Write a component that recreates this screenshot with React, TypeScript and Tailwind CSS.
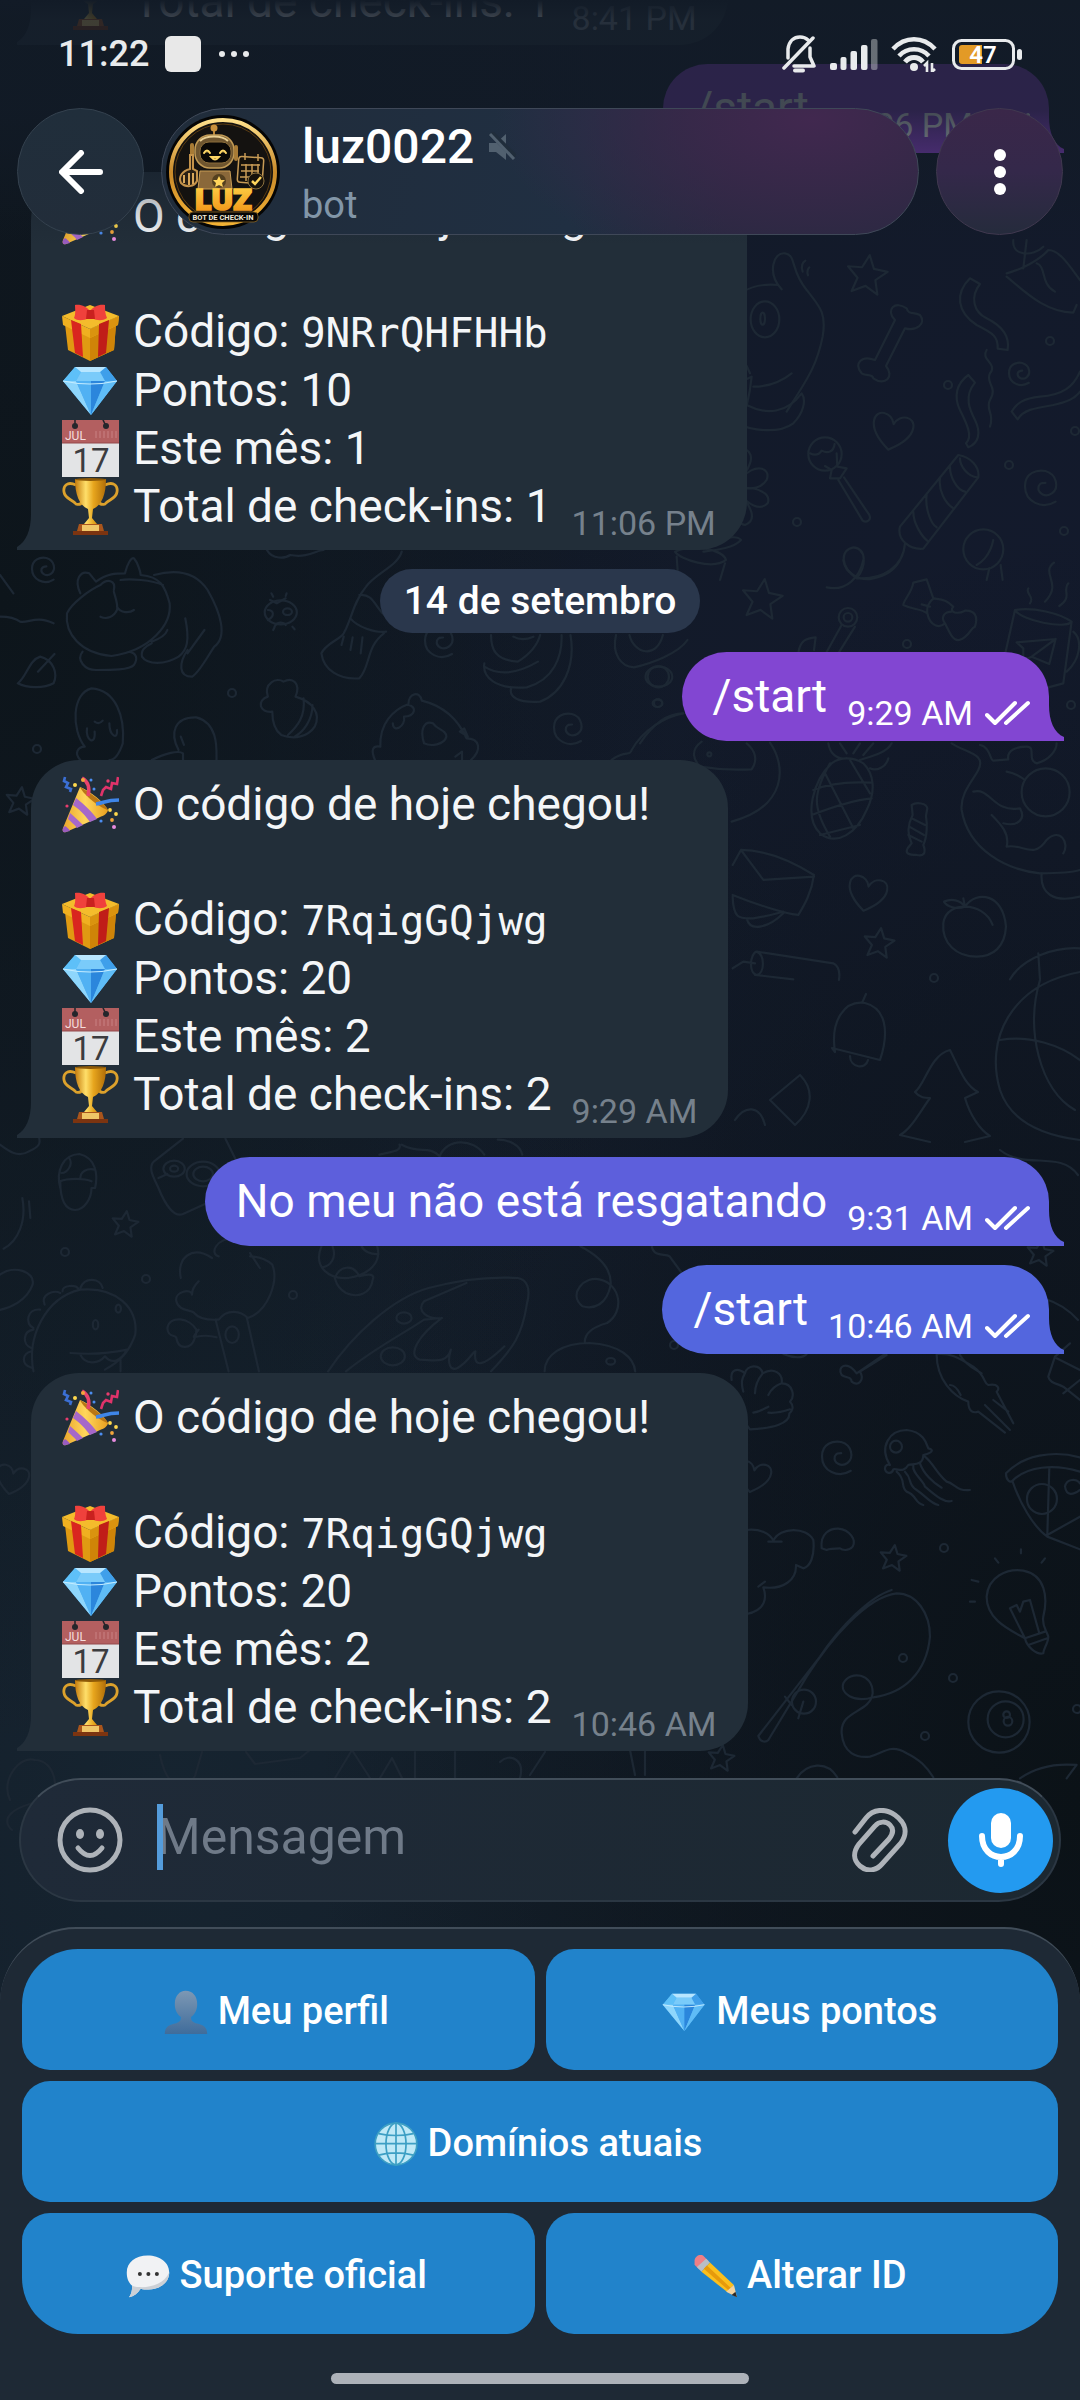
import type { ReactNode } from "react";

type Incoming = {
  from: "bot";
  code: string;
  points: number;
  month: number;
  total: number;
  time: string;
};

type Outgoing = {
  from: "me";
  text: string;
  time: string;
  tone: string;
};

type DayMark = { from: "day"; text: string };

type Message = Incoming | Outgoing | DayMark;

const messages: Message[] = [
  { from: "bot", code: "4KdTmWbXsa", points: 10, month: 1, total: 1, time: "8:41 PM" },
  { from: "me", text: "/start", time: "11:06 PM", tone: "bg-[#8f43cf] text-[#8f43cf]" },
  { from: "bot", code: "9NRrQHFHHb", points: 10, month: 1, total: 1, time: "11:06 PM" },
  { from: "day", text: "14 de setembro" },
  { from: "me", text: "/start", time: "9:29 AM", tone: "bg-[#8246d2] text-[#8246d2]" },
  { from: "bot", code: "7RqigGQjwg", points: 20, month: 2, total: 2, time: "9:29 AM" },
  {
    from: "me",
    text: "No meu não está resgatando",
    time: "9:31 AM",
    tone: "bg-[#5d5fdc] text-[#5d5fdc]",
  },
  { from: "me", text: "/start", time: "10:46 AM", tone: "bg-[#5366de] text-[#5366de]" },
  { from: "bot", code: "7RqigGQjwg", points: 20, month: 2, total: 2, time: "10:46 AM" },
];

/* ---------- emoji drawings, all on a 57 x 57 box ---------- */

function Emoji({ className, children }: { className?: string; children: ReactNode }) {
  return (
    <svg viewBox="0 0 57 57" className={className ?? "size-[57px] shrink-0"} aria-hidden>
      {children}
    </svg>
  );
}

function PartyEmoji() {
  return (
    <Emoji>
      <defs>
        <linearGradient id="cone" x1="0" y1="0" x2="1" y2="0">
          <stop offset="0" stopColor="#e9a52b" />
          <stop offset=".5" stopColor="#ffd65c" />
          <stop offset="1" stopColor="#e8a01f" />
        </linearGradient>
      </defs>
      <path d="M18 11C28 15 42 26 46 34C45 39 40 40 36 42L4 56C1 57 0 55 1 52Z" fill="url(#cone)" />
      <path d="M14 22C22 28 31 37 35 43L28 46C24 40 17 33 11 29Z" fill="#a668c9" />
      <path d="M8 37C13 41 18 46 21 49L15 52C12 48 9 46 6 43Z" fill="#a668c9" />
      <path d="M3 50C5 51 7 53 8 55L4 56C1 57 0 55 1 52Z" fill="#9a5cc0" />
      <path d="M18 11C24 14 42 26 46 34C40 33 22 20 18 11Z" fill="#b97716" />
      <path d="M20 2C27 6 28 12 26 20" stroke="#e8436d" strokeWidth="3.5" fill="none" />
      <path d="M34 28C42 27 44 24 57 24" stroke="#3f86e8" strokeWidth="3.5" fill="none" />
      <path d="M3 1L2 5L6 7L4 11L9 13L8 16" stroke="#3b6fd4" strokeWidth="2.6" fill="none" />
      <path d="M56 1L55 8L50 7L49 13L44 11L41 14L39 20" stroke="#e0336a" strokeWidth="2.6" fill="none" />
      <circle cx="13" cy="9" r="2" fill="#ffd84d" />
      <circle cx="21" cy="4" r="2" fill="#f2a63b" />
      <circle cx="29" cy="4" r="1.5" fill="#4c8df0" />
      <circle cx="46" cy="5" r="1.7" fill="#e83c6e" />
      <circle cx="32" cy="13" r="1.5" fill="#4c8df0" />
      <circle cx="5" cy="30" r="1.6" fill="#e83c6e" />
      <circle cx="48" cy="34" r="1.9" fill="#ffd84d" />
      <circle cx="54" cy="38" r="1.9" fill="#ffd84d" />
      <circle cx="50" cy="44" r="1.9" fill="#f2a63b" />
      <circle cx="39" cy="45" r="1.6" fill="#4c8df0" />
      <circle cx="52" cy="51" r="2" fill="#e78be0" />
    </Emoji>
  );
}

function GiftEmoji() {
  return (
    <Emoji>
      <path d="M3 20L28 32L54 20L52 46L28 57L6 46Z" fill="#e09a12" />
      <path d="M28 32L54 20L52 46L28 57Z" fill="#cf8408" />
      <path d="M0 12L28 25L57 12L56 21L28 34L1 21Z" fill="#f0b020" />
      <path d="M28 25L57 12L56 21L28 34Z" fill="#da930f" />
      <path d="M0 12L28 1L57 12L28 25Z" fill="#f4bc2c" />
      <path d="M9 16L19 20L21 53L13 49Z" fill="#d9261f" />
      <path d="M37 20L47 16L44 49L36 53Z" fill="#c01d18" />
      <path d="M27 14C21 17 15 17 12 14C14 10 13 5 13 1C19 0 25 3 28 7C31 3 37 0 43 1C43 5 43 10 45 14C41 17 35 17 30 14Z" fill="#f0413c" />
      <path d="M25 6H32L33 15H24Z" fill="#c9211f" />
    </Emoji>
  );
}

function GemEmoji({ className }: { className?: string }) {
  return (
    <Emoji className={className}>
      <path d="M13 5H44L55 19L29 53L1 19Z" fill="#4fb0f2" />
      <path d="M13 5L1 19H14L19 10Z" fill="#5ec0f8" />
      <path d="M44 5L55 19H43L38 10Z" fill="#3f9fea" />
      <path d="M13 5H44L38 10H19Z" fill="#b8e6ff" />
      <path d="M19 10H38L43 19H14Z" fill="#7acbfa" />
      <path d="M1 19H14L29 53Z" fill="#8ed6fc" />
      <path d="M14 19H29V53Z" fill="#51b1f3" />
      <path d="M29 19H43L29 53Z" fill="#2b86dc" />
      <path d="M43 19H55L29 53Z" fill="#5fbcf6" />
      <path d="M1 19Q28 25 55 19" stroke="#c4ecff" strokeWidth="1.2" fill="none" />
    </Emoji>
  );
}

function CalendarEmoji() {
  return (
    <Emoji>
      <rect width="57" height="57" fill="#e3e4e6" />
      <rect width="57" height="23" fill="#b35f60" />
      <path d="M0 23H57" stroke="#94494b" strokeWidth="1" />
      <path d="M34 18V11M38 18V11M42 18V11M46 18V11M50 18V11M54 18V11" stroke="#c98283" strokeWidth="1" />
      <circle cx="13" cy="6" r="3" fill="#25262b" />
      <circle cx="44" cy="6" r="3" fill="#25262b" />
      <path d="M13 6V0M44 6L41 0" stroke="#25262b" strokeWidth="1.6" />
      <text x="3" y="20" fill="#f5dede" fontSize="12" fontFamily="Roboto, sans-serif">
        JUL
      </text>
      <text x="29" y="52" fill="#3c3c3f" fontSize="33" textAnchor="middle" fontFamily="Roboto, sans-serif">
        17
      </text>
    </Emoji>
  );
}

function TrophyEmoji() {
  return (
    <Emoji>
      <defs>
        <linearGradient id="cup" x1="0" y1="0" x2="1" y2="0">
          <stop offset="0" stopColor="#c47a0c" />
          <stop offset=".35" stopColor="#ffdf6a" />
          <stop offset=".6" stopColor="#e7a51d" />
          <stop offset="1" stopColor="#b06d08" />
        </linearGradient>
      </defs>
      <path
        d="M14 7C5 3 1 8 2 14C3 21 10 21 14 26C17 27 19 26 20 24M43 7C52 3 56 8 55 14C54 21 47 21 43 26C40 27 38 26 37 24"
        stroke="#dca12c"
        strokeWidth="2.8"
        fill="none"
      />
      <path d="M13 1H44C44 16 40 27 31 31L30 40L35 46H22L27 40L26 31C17 27 13 16 13 1Z" fill="url(#cup)" />
      <ellipse cx="28.500" cy="1.500" rx="15.500" ry="1.500" fill="#8d5907" />
      <path d="M17 46H40L42 53H15Z" fill="#a9551c" />
      <rect x="20" y="47" width="17" height="6" fill="#f0c667" />
      <rect x="11" y="53" width="35" height="4" fill="#7c3410" />
    </Emoji>
  );
}

function BustEmoji({ className }: { className?: string }) {
  return (
    <Emoji className={className}>
      <defs>
        <linearGradient id="bust" x1="0" y1="0" x2="0" y2="1">
          <stop offset="0" stopColor="#7d98b4" />
          <stop offset="1" stopColor="#3f6c9b" />
        </linearGradient>
      </defs>
      <path d="M28 1C37 1 43 8 43 18C43 26 40 31 35 35C35 39 36 41 41 43C50 45 56 47 56 57H1C1 47 7 45 16 43C21 41 22 39 22 35C17 31 14 26 14 18C14 8 20 1 28 1Z" fill="url(#bust)" />
    </Emoji>
  );
}

function GlobeEmoji({ className }: { className?: string }) {
  return (
    <Emoji className={className}>
      <circle cx="28.500" cy="28.500" r="27" fill="#bfe9f7" />
      <g fill="none" stroke="#3d9fc4" strokeWidth="2.2">
        <circle cx="28.500" cy="28.500" r="27" />
        <ellipse cx="28.500" cy="28.500" rx="13" ry="27" />
        <path d="M28.500 1V56M2 28H55M6 15Q28 20 51 15M6 43Q28 37 51 43" />
      </g>
    </Emoji>
  );
}

function SpeechEmoji({ className }: { className?: string }) {
  return (
    <Emoji className={className}>
      <path d="M28 2C44 2 56 11 56 24C56 37 44 46 29 46C25 46 22 46 19 45C15 51 10 55 4 56C7 52 8 47 8 41C3 37 1 31 1 24C1 11 12 2 28 2Z" fill="#f1f2f4" />
      <path d="M56 24C56 37 44 46 29 46C25 46 22 46 19 45C15 51 10 55 4 56C7 52 8 47 8 41C22 46 48 42 56 24Z" fill="#ccd0d6" />
      <circle cx="18" cy="26" r="2.600" fill="#333" />
      <circle cx="29" cy="26" r="2.600" fill="#333" />
      <circle cx="40" cy="26" r="2.600" fill="#333" />
    </Emoji>
  );
}

function PencilEmoji({ className }: { className?: string }) {
  return (
    <Emoji className={className}>
      <path d="M2 8C3 3 8 0 13 2L20 9L8 20L2 14Z" fill="#ef7f86" />
      <path d="M17 6L22 11L11 23L5 17Z" fill="#b9bec6" />
      <path d="M22 11L53 40L44 49L11 23Z" fill="#fbbf1d" />
      <path d="M18 15L49 44L46 47L14 19Z" fill="#e69a0c" />
      <path d="M53 40L57 56L43 49Z" fill="#f3d3a0" />
      <path d="M55 49L57 56L50 53Z" fill="#2f2a28" />
    </Emoji>
  );
}

/* ---------- wallpaper ---------- */

const stars = [
  [762, 599, 20], [867, 275, 20], [879, 943, 15], [893, 1558, 13], [721, 1758, 13],
  [125, 1224, 13], [20, 801, 14], [1040, 1253, 13],
];
const hearts = [
  [867, 894, 19], [892, 432, 20], [753, 1477, 17], [12, 1480, 16],
];
const dots = [
  [907, 644], [658, 703], [1071, 705], [934, 978], [797, 522], [1050, 341], [948, 385],
  [1009, 465], [1075, 431], [1064, 531], [944, 1548], [953, 1678], [903, 1658], [925, 1736],
  [1077, 1709], [674, 1345], [65, 1252], [146, 1279], [293, 1295], [232, 693], [37, 749],
];
const swirls = [
  [1020, 374, 11], [1042, 488, 17], [838, 1458, 16], [44, 570, 12], [569, 729, 15], [440, 642, 15],
];

function Wallpaper() {
  return (
    <svg
      viewBox="0 0 1080 2400"
      preserveAspectRatio="xMidYMid slice"
      className="pointer-events-none absolute inset-0 size-full [&_*]:[vector-effect:non-scaling-stroke]"
      fill="none"
      stroke="#1d2834"
      strokeWidth="2.2"
      strokeLinecap="round"
      strokeLinejoin="round"
      aria-hidden
    >
      {stars.map(([x, y, r]) => (
        <path
          key={`${x}-${y}`}
          transform={`translate(${x} ${y}) rotate(8) scale(${r / 10})`}
          d="M0 -10L3 -3.500L10 -3L4.500 2L6.500 9L0 5.500L-6.500 9L-4.500 2L-10 -3L-3 -3.500Z"
        />
      ))}
      {hearts.map(([x, y, r]) => (
        <path
          key={`${x}-${y}`}
          transform={`translate(${x} ${y}) rotate(12) scale(${r / 10})`}
          d="M0 9C-6 5 -10 1 -10 -4C-10 -10 -2 -10 0 -4C2 -10 10 -10 10 -4C10 1 6 5 0 9Z"
        />
      ))}
      {swirls.map(([x, y, r]) => (
        <path
          key={`${x}-${y}`}
          transform={`translate(${x} ${y}) scale(${r / 10})`}
          d="M8 8C0 13 -10 8 -10 -1C-10 -9 -3 -11 2 -10C9 -8 10 0 6 3C2 6 -3 3 -2 -1C-1 -3 0 -3 2 -3"
        />
      ))}
      {dots.map(([x, y]) => (
        <circle key={`${x}-${y}`} cx={x} cy={y} r="4" />
      ))}

      {/* dog, bone, lollipop, party cracker */}
      <g transform="translate(640 240) scale(.3333)">
        <path d="M270 190C310 140 360 130 415 135M425 148C380 100 400 35 435 40C470 45 450 90 500 150C540 200 560 220 548 290C530 380 500 420 440 515" />
        <path d="M270 75C300 60 290 120 315 145M270 440L335 410C330 460 320 510 300 550M340 440C390 440 430 420 455 400M320 378L330 400M325 497C380 525 440 520 485 460C500 480 490 520 460 550C420 580 340 575 290 550" />
        <ellipse cx="375" cy="238" rx="43" ry="54" />
        <ellipse cx="368" cy="236" rx="7" ry="18" />
        <path d="M488 95C482 80 488 65 496 62M504 106C500 95 504 85 508 82" />
        <path d="M765 240C735 210 765 180 800 205C805 225 820 215 840 225C860 250 830 275 795 265L738 378C765 410 735 440 700 415C698 400 680 410 665 400C640 370 665 345 705 360Z" />
        <circle cx="555" cy="642" r="50" />
        <path d="M510 640C530 650 540 640 545 632C560 640 580 640 584 612M590 640L592 680L620 685L600 715L570 715L575 690L555 678M595 720L668 842C680 850 695 840 688 825L612 712" />
        <path d="M955 645L780 860C770 900 810 930 850 926L1015 712C1020 680 990 650 955 645ZM930 680C930 710 950 750 975 755M900 715C895 750 915 790 940 805M860 765C855 800 870 850 890 862M820 815C820 850 845 890 865 905M960 655C960 680 985 710 1012 712" />
        <path d="M795 910C790 980 730 1020 650 1015C600 980 600 930 640 922C680 925 680 980 650 1015" />
        <path d="M990 115L1020 132C990 170 1000 215 1040 235C1090 260 1110 290 1103 330L1073 326C1075 290 1060 280 1010 255C950 215 945 160 990 115Z" />
        <path d="M985 405L1005 428C970 470 990 510 1005 540C1025 580 1015 610 985 622L978 610C1000 590 980 550 960 510C940 470 950 430 985 405ZM1040 330C1020 360 1075 370 1050 400C1035 430 1075 440 1050 480C1035 510 1065 520 1050 560" />
        <path d="M1320 395C1300 440 1270 465 1200 470C1150 475 1130 490 1115 515L1133 538C1150 510 1180 505 1240 495C1290 485 1310 470 1320 455" />
        <path d="M1100 100C1140 90 1200 60 1225 30C1260 30 1290 80 1320 120M1100 110C1150 150 1210 215 1300 218L1310 195M1150 85L1160 0M1190 70C1220 80 1200 130 1245 155M1120 0C1115 50 1180 50 1210 20" />
        <circle cx="1030" cy="928" r="60" />
        <path d="M1060 900C1050 950 1020 970 1010 975M1048 985L1040 1020M1082 975L1088 1020" />
        <path d="M272 640C300 610 345 630 330 670C320 700 310 700 305 715C340 670 395 680 380 720C360 750 330 745 305 745C350 740 395 760 383 790C360 815 320 790 305 765C330 800 355 840 315 855C285 850 280 810 278 790M270 705C310 715 315 765 275 790" />
        <path d="M105 935C160 910 250 930 258 960C220 990 120 960 105 935ZM110 950L115 1020M255 970L240 1020M200 925C240 890 290 885 303 900C280 925 230 930 190 935" />
      </g>

      {/* bow, mug, pineapple, bowl, envelope, peach */}
      <g transform="translate(640 560) scale(.3333)">
        <path d="M610 0C615 40 660 65 700 55C750 45 770 20 780 0M560 82C620 95 660 50 670 0" />
        <path d="M860 58L820 68C815 100 790 120 790 135C820 150 840 145 862 160C870 200 900 205 915 190C930 220 940 245 958 240C990 230 990 205 1005 200C1015 170 1005 150 975 152C950 165 925 155 940 140C910 110 890 120 880 115ZM862 160C858 130 880 115 885 115M845 133L870 140M915 190C900 170 915 155 935 155" />
        <circle cx="624" cy="172" r="28" />
        <circle cx="624" cy="172" r="13" />
        <path d="M605 195L558 280M645 200L595 280M475 280C480 240 500 235 527 232L522 270" />
        <path d="M1125 150C1180 140 1260 160 1295 185C1280 210 1140 180 1125 150L1097 275M1295 185L1270 370L1225 382M1300 215C1330 240 1320 300 1280 335M1130 247L1247 237L1228 312L1175 290L1150 300L1150 265ZM1175 290L1247 237M1165 85C1155 100 1185 110 1170 130M1242 8C1200 40 1270 70 1215 125M1285 70C1265 90 1300 110 1258 138" />
        <circle cx="55" cy="350" r="32" />
        <path d="M0 550C40 490 80 460 130 460M185 545C150 570 160 600 180 620C240 630 300 630 335 628C355 600 345 570 320 550M390 548C440 620 440 740 275 785" />
        <circle cx="208" cy="583" r="6" />
        <path d="M575 610C520 660 490 770 540 820C590 860 650 820 680 750C710 690 700 640 670 610C640 590 600 590 575 610ZM555 640L640 805M520 690C580 665 640 665 692 668M515 765C580 740 640 720 695 715M540 825L660 795M630 600L690 700M570 610C520 700 515 740 570 830M565 550C570 580 590 600 620 595M755 550C740 580 690 590 660 600M745 595C740 620 710 635 690 625M600 550L620 580M660 550L640 580M700 550L670 585" />
        <path d="M815 735C830 725 860 730 862 745L858 768C862 790 862 830 850 855C860 880 850 890 830 885C805 885 795 880 803 865L815 850C800 820 805 790 818 765ZM815 775L855 795M808 800L852 825M805 825L845 845" />
        <path d="M935 550C980 580 1040 580 1015 630C1000 660 960 700 965 750C985 870 1100 930 1200 940C1240 940 1290 940 1320 930M1000 695C1050 680 1060 760 1140 745C1160 780 1130 800 1090 790M1100 635C1130 640 1140 650 1155 660M1020 555C1050 560 1050 600 1060 602L1105 598C1100 570 1130 560 1160 560C1190 560 1160 600 1190 610C1230 600 1250 570 1250 550M1100 860C1110 820 1080 790 1055 765M1100 860C1150 850 1180 900 1220 840C1260 800 1290 850 1270 880" />
        <circle cx="1217" cy="697" r="72" />
        <path d="M1205 940C1200 1000 1240 1030 1320 1010" />
        <path d="M278 915L303 870C380 870 450 900 522 945C515 1000 490 1040 475 1065C430 1060 340 1030 278 1005M303 870L370 960L522 950M278 1010C280 1080 300 1075 340 1075C380 1070 410 1060 430 1055M320 1075C330 1120 390 1100 430 1060" />
        <path d="M975 1040C1010 990 1090 1000 1098 1100C1095 1160 1060 1190 1010 1190C950 1190 905 1150 910 1090C915 1050 950 1040 975 1040C1010 1040 1045 1060 1058 1095M975 1040C950 1050 920 1040 912 1025C935 1015 960 1020 975 1040ZM975 1040L970 1015" />
        <path d="M350 1175C330 1180 325 1240 350 1245C375 1240 375 1185 350 1175L580 1210C600 1220 600 1240 597 1260M278 1225L310 1205L345 1210M345 1245L460 1258M1110 1258C1150 1190 1250 1160 1320 1165M1195 1180L1200 1258" />
      </g>

      {/* bell, tree, ball */}
      <path d="M835 1052C830 1020 845 1000 865 1003C885 1008 890 1030 880 1060L832 1048ZM850 1056C850 1068 866 1070 868 1060M862 1003L866 994" />
      <path d="M950 1050C930 1055 925 1085 915 1092C920 1098 925 1098 930 1098C918 1115 910 1130 900 1135L930 1142M950 1050C960 1070 965 1085 978 1092L965 1098C970 1115 980 1130 990 1136L965 1142M1080 972C1010 985 985 1040 1000 1090C1010 1120 1040 1135 1080 1140M1040 980C1025 1030 1040 1090 1075 1110M1000 1040C1030 1035 1060 1045 1080 1060" />
      <path d="M770 1100L800 1075C815 1090 812 1110 795 1125ZM735 1120C745 1105 760 1105 765 1125M1010 1300C1030 1290 1060 1300 1078 1320M1000 1150C1025 1170 1060 1150 1078 1175" />

      {/* shell, jellyfish, pizza, fishing rod, bulb, eight ball */}
      <g transform="translate(640 1340) scale(.3333)">
        <path d="M275 120C270 90 290 80 315 100C320 75 360 70 368 100C400 80 430 100 425 130C460 130 465 170 450 185C465 200 455 215 448 220C450 250 400 265 330 268L320 255M310 155C300 120 310 110 315 100M345 160C345 130 360 110 368 100M385 165C395 145 410 135 425 130M340 218C360 215 375 205 385 200M385 218C410 220 430 215 450 208" />
        <path d="M430 42C460 55 490 55 500 42M735 42L650 100C620 60 590 80 605 105C620 115 635 110 635 125C655 140 675 120 660 95L740 45" />
        <path d="M890 42C890 120 940 170 985 185C985 215 1000 220 1015 215L1095 278M895 42C930 40 950 50 1000 80C1040 110 1030 130 1045 135C1075 130 1080 145 1070 155L1120 250M960 45C980 80 1010 90 1025 100M930 135C945 135 955 150 962 165M1035 195L1110 270M1060 180L1105 215" />
        <path d="M1290 10L1245 50L1225 110C1230 130 1250 130 1270 140L1320 180M1250 55L1320 90M1270 160L1320 120" />
        <path d="M750 375C715 320 750 270 800 270C850 275 860 310 865 325C885 330 875 340 850 345C850 380 815 370 805 375C790 400 775 385 760 388C755 405 735 400 735 385C735 375 745 372 750 375ZM770 395C800 420 780 440 800 455C830 465 825 490 850 495M795 395C820 420 800 430 830 450C860 470 870 490 895 495M820 375C815 400 850 420 855 440C880 460 910 490 935 483M840 370C850 400 880 430 905 443M855 350C880 370 890 400 920 425C945 430 950 455 990 450" />
        <circle cx="768" cy="320" r="18" />
        <path d="M1320 352C1240 330 1150 345 1098 400C1098 420 1110 430 1118 422C1160 380 1240 370 1320 395M1118 425C1140 490 1180 560 1222 590L1320 628M1228 385L1222 585L1320 530" />
        <circle cx="1206" cy="477" r="45" />
        <path d="M1275 440C1280 415 1310 415 1320 430M1275 440C1280 470 1300 465 1320 450" />
        <path d="M318 570C360 565 390 580 400 602C420 560 500 560 520 600C525 650 510 680 490 685L468 675C470 720 430 750 370 742C380 770 380 810 320 822M385 605H425M355 740L375 725" />
        <path d="M545 625C540 580 570 565 595 566C630 570 650 600 638 620C625 635 605 630 600 625Q570 625 560 630Z" />
        <path d="M755 750C690 770 600 860 540 950L355 1188C360 1205 375 1210 385 1200L500 1010C570 900 680 770 770 760C830 760 870 820 870 890C860 1000 790 1060 700 1072C640 1090 600 1060 610 1030C630 990 700 1000 698 1060C690 1120 600 1110 605 1180C610 1240 650 1255 690 1250C730 1240 750 1210 800 1240C840 1260 860 1280 880 1312" />
        <circle cx="492" cy="1085" r="36" />
        <path d="M490 1085L475 1135M435 1070L455 1095M470 1315C500 1270 560 1260 592 1312M1140 1315C1190 1280 1250 1270 1310 1275L1280 1315" />
        <path d="M1155 895C1110 870 1040 840 1040 770C1045 710 1100 685 1150 692C1215 705 1225 770 1210 830C1205 860 1220 870 1225 890C1225 910 1210 925 1210 940C1190 945 1160 920 1155 895L1110 805L1130 795L1140 815L1150 785L1170 780L1198 880M1155 895L1215 875M1165 915L1222 895M1143 628V640M1065 655L1075 668M1215 655L1205 668M995 720L1015 725M990 785H1005" />
        <circle cx="1077" cy="1146" r="92" />
        <circle cx="1097" cy="1138" r="54" />
        <circle cx="1100" cy="1124" r="10" />
        <circle cx="1104" cy="1144" r="13" />
      </g>

      {/* cat, cactus ball, giraffe leg, bananas, acorn, guinea pig */}
      <g transform="translate(0 550) scale(.4464 .3333)">
        <path d="M180 130C165 90 180 60 200 70L215 95C240 70 260 70 280 70C285 40 295 20 300 25C310 40 315 70 315 75C360 80 370 110 380 160C385 220 340 300 250 318C180 310 145 250 150 190C160 160 200 120 225 105C240 85 260 90 255 120M270 90C290 85 340 90 365 105M255 125C260 150 265 165 262 180C255 200 240 210 225 200M262 170C270 190 290 190 300 180M345 75C400 55 440 70 465 120C495 190 510 260 480 290C460 330 445 370 430 380C400 380 400 340 420 300M415 205C425 270 420 300 400 320C370 345 330 345 318 320C315 300 325 290 340 280M185 305C170 330 190 360 215 360C250 360 290 360 300 345C310 325 305 310 290 305M458 240L420 310M375 240C370 260 350 270 340 275" />
        <path d="M0 75L30 130M0 200C20 200 35 205 45 215C65 220 80 195 120 220M40 400C60 380 65 330 90 320C120 330 130 370 120 400C100 415 60 415 40 400ZM85 365L122 312" />
        <circle cx="629" cy="187" r="36" />
        <circle cx="644" cy="185" r="10" />
        <path d="M605 150L620 160L640 145M600 210C615 200 615 180 600 180M615 230C620 215 635 215 640 225M612 140L608 130M640 138L642 130M655 230L660 238M615 232L612 240" />
        <path d="M900 5C890 50 840 70 820 110C790 160 790 200 770 250C760 270 730 280 720 310C725 360 760 390 805 385C830 350 820 290 860 250M805 135C840 130 840 180 870 205M785 205C800 230 840 250 865 245M770 260L765 285M790 262L785 300M812 262L808 310" />
        <path d="M1100 255C1100 300 1110 330 1160 335C1190 310 1205 280 1210 255M1085 340C1080 380 1110 420 1180 412C1240 390 1260 320 1258 255M1145 415C1140 440 1160 460 1210 455C1260 430 1290 350 1278 255M1085 350C1120 380 1160 370 1205 335M1150 260Q1170 275 1195 260" />
        <path d="M1380 255C1370 310 1390 350 1420 352C1460 340 1520 310 1540 270M1410 255C1420 310 1470 330 1485 255" />
        <circle cx="1476" cy="380" r="30" />
        <circle cx="1473" cy="460" r="11" />
        <path d="M610 485C580 490 575 450 600 440C590 400 620 380 635 395C655 380 675 400 662 440C700 455 720 490 705 530C690 560 660 570 630 555C615 540 610 510 610 485ZM680 445C685 500 665 530 645 555M700 465C700 510 680 545 660 560" />
        <path d="M180 630C165 610 175 590 190 590C160 540 160 430 205 415C260 420 280 500 275 580C265 620 255 630 245 630M195 535C190 570 215 590 212 545M245 520C245 560 265 570 262 540M212 515Q222 525 230 512M400 600C380 550 390 500 440 502C490 520 485 600 485 630M340 630C370 610 400 600 410 610V630M405 560L412 585" />
        <path d="M840 630C830 600 835 585 852 590C850 520 880 480 915 462C915 430 940 420 945 452C1000 470 1030 520 1045 565C1075 565 1080 600 1055 630M880 520C880 550 910 530 905 500C930 500 935 470 915 465M950 580C940 540 950 510 970 520C980 540 1000 540 1000 560C995 585 965 590 950 580ZM1030 545L1040 535L1048 560ZM1020 620L1035 605V630" />
        <path d="M1370 630C1400 600 1410 620 1415 600C1440 540 1490 500 1530 490M598 0C610 30 640 25 650 15C690 25 710 0 725 0" />
      </g>

      {/* mushroom, monster, cauliflower, rocket, dinosaur */}
      <g transform="translate(0 1138) scale(.4464 .3333)">
        <path d="M135 150C125 100 140 50 178 48C215 60 220 110 213 150L205 150C205 180 190 215 168 216C145 215 135 180 135 130C150 120 190 120 205 130M155 60C165 80 150 105 138 105M180 120C180 100 195 90 213 95" />
        <path d="M410 2L345 70C330 90 345 120 355 150C370 200 390 240 410 228L480 185M505 2L530 70M355 120L375 108" />
        <circle cx="390" cy="92" r="24" />
        <circle cx="390" cy="92" r="9" />
        <circle cx="455" cy="108" r="37" />
        <circle cx="455" cy="108" r="22" />
        <path d="M0 20C20 40 40 60 65 40C90 25 90 15 88 2M50 180C60 250 40 310 8 332M65 190L68 240M0 410C30 380 80 400 73 440C60 490 20 510 0 516" />
        <path d="M490 355C470 350 480 300 530 300M405 420C395 360 430 320 475 360M430 470C430 450 445 430 445 430M430 470C430 450 390 460 395 490C400 520 430 515 435 525C450 550 480 545 490 545C510 510 540 520 555 540C600 520 625 430 610 380C590 355 570 355 560 355M560 345L582 390M483 545L512 700M553 540L580 700M445 575C420 620 440 580 485 598M440 575C425 540 380 530 375 570C375 600 395 590 395 600C400 640 430 630 435 605C440 590 440 580 440 575" />
        <ellipse cx="520" cy="590" rx="15" ry="25" />
        <path d="M720 325C700 390 740 425 780 420C830 410 855 370 845 325M745 325C755 360 740 385 722 388M750 420C760 385 790 375 805 415C830 405 840 410 835 425C830 470 800 480 775 465C755 450 752 430 750 420M810 325C815 340 830 350 848 348" />
        <path d="M735 700C790 590 880 480 960 450C1030 425 1100 415 1160 420C1180 425 1190 450 1180 500C1170 590 1150 630 1100 700M775 700C840 630 900 590 950 545L990 540C960 545 930 520 950 490L1045 435M990 540C940 590 910 650 940 665C970 665 1000 680 1010 635C1000 680 1010 700 1025 690C1050 670 1060 640 1065 640C1060 690 1080 690 1130 625" />
        <circle cx="905" cy="540" r="17" />
        <circle cx="880" cy="655" r="27" />
        <path d="M1300 325C1350 360 1370 400 1368 440C1360 500 1330 515 1305 505C1270 470 1310 410 1345 425C1390 440 1400 520 1360 555C1320 570 1310 590 1310 612M1220 700C1220 650 1260 615 1320 615C1390 620 1420 660 1423 700M1460 325C1465 360 1490 345 1500 355L1530 410" />
        <circle cx="1368" cy="670" r="10" />
        <path d="M75 700C60 600 100 480 180 455C260 445 310 510 303 590C290 640 270 670 235 695M158 645C200 650 250 645 285 635C270 670 250 680 235 655C220 680 190 680 180 650M270 665V700M140 460C140 440 170 440 175 452M180 450C190 415 225 420 230 450M100 500C90 470 120 455 135 465M75 570C55 560 60 510 90 515M70 630C50 620 50 580 75 575M72 690C45 680 50 645 70 640" />
        <ellipse cx="214" cy="560" rx="6" ry="14" />
        <ellipse cx="265" cy="512" rx="6" ry="12" />
        <path d="M850 50C880 40 900 40 895 20M900 20C940 50 960 20 985 55C1000 0 1060 0 1085 50M1115 5C1140 5 1165 20 1170 50" />
      </g>

      {/* row behind the composer */}
      <path d="M10 1800C0 1780 20 1755 35 1760C55 1760 60 1790 50 1800C10 1805 0 1820 12 1830M160 1755C165 1780 180 1800 195 1776L202 1752M246 1752L255 1764L300 1758L310 1750M335 1778L352 1750L370 1778M380 1778L392 1758L402 1778M415 1752V1778M455 1752V1778M500 1762C510 1752 525 1760 520 1778M530 1775L545 1752M630 1750L635 1775M645 1750V1775" />
    </svg>
  );
}

/* ---------- status bar ---------- */

function StatusBar() {
  return (
    <div className="flex h-[108px] items-center justify-between px-[58px] text-[#e8eaec]">
      <div className="flex items-center">
        <span className="text-[36px] leading-none font-medium">11:22</span>
        <span className="ml-4 size-9 rounded-md bg-[#e8e8e8]" />
        <span className="ml-[18px] flex gap-1.5">
          <i className="size-1.5 rounded-full bg-current" />
          <i className="size-1.5 rounded-full bg-current" />
          <i className="size-1.5 rounded-full bg-current" />
        </span>
      </div>
      <div className="flex items-center">
        <svg viewBox="0 0 34 38" className="h-[38px] w-[34px]" fill="none" stroke="currentColor" strokeWidth="3.500" strokeLinecap="round" strokeLinejoin="round" aria-hidden>
          <path d="M6 23V14C7 6 12 2 18 2C21 2 24 3 26 5M28 13V22L32 31H12" />
          <path d="M31 3L2 33" />
          <path d="M13 35.500H21" strokeWidth="4" />
        </svg>
        <svg viewBox="0 0 48 31" className="ml-3.5 h-[31px] w-12" fill="currentColor" aria-hidden>
          <rect x="0" y="24" width="7" height="7" rx="2" />
          <rect x="10.500" y="18" width="6" height="13" rx="2" />
          <rect x="20.500" y="12" width="6.500" height="19" rx="2" />
          <rect x="31" y="6" width="6.500" height="25" rx="2" />
          <rect x="41" y="0" width="6.500" height="31" rx="2" opacity=".4" />
        </svg>
        <svg viewBox="0 0 46 35" className="ml-[13px] h-[35px] w-[46px]" fill="none" stroke="currentColor" aria-hidden>
          <path d="M2 12C14 -1 32 -1 44 12M8 19C16 10 30 10 38 19" strokeWidth="4.500" />
          <path d="M14 25C19 19 27 19 32 25" strokeWidth="5" />
          <circle cx="23" cy="30" r="4" fill="currentColor" stroke="none" />
          <path d="M36 35V26L33 29M41 26V35L44 32" strokeWidth="2.600" />
        </svg>
        <svg viewBox="0 0 70 31" className="ml-[15px] h-[31px] w-[70px]" aria-hidden>
          <rect x="1.500" y="1.500" width="60" height="28" rx="8" fill="none" stroke="currentColor" strokeWidth="3" />
          <rect x="65" y="10" width="5" height="11" rx="2.500" fill="currentColor" />
          <path d="M10 6H30V25H10Q7 25 7 22V9Q7 6 10 6Z" fill="#e39a26" />
          <text x="31" y="24" textAnchor="middle" fontSize="24" fontWeight="600" fill="#fff" fontFamily="Roboto, sans-serif">
            47
          </text>
        </svg>
      </div>
    </div>
  );
}

/* ---------- header ---------- */

function Avatar() {
  return (
    <svg viewBox="0 0 114 114" className="size-[114px] shrink-0" role="img" aria-label="luz0022">
      <defs>
        <linearGradient id="gold" x1="0" y1="0" x2="0" y2="1">
          <stop offset="0" stopColor="#ffe08a" />
          <stop offset=".5" stopColor="#c98a2a" />
          <stop offset="1" stopColor="#f3b234" />
        </linearGradient>
        <linearGradient id="luz" x1="0" y1="0" x2="0" y2="1">
          <stop offset="0" stopColor="#ffd54a" />
          <stop offset="1" stopColor="#f08d12" />
        </linearGradient>
      </defs>
      <circle cx="57" cy="57" r="57" fill="#050505" />
      <circle cx="57" cy="57" r="52" fill="#141210" stroke="url(#gold)" strokeWidth="4" />
      <circle cx="57" cy="57" r="48" fill="none" stroke="#5b3c12" strokeWidth="1" />
      <path d="M48 20V14" stroke="#b88539" strokeWidth="2" />
      <circle cx="48" cy="13" r="3.500" fill="#c9903c" />
      <rect x="29" y="20" width="39" height="33" rx="15" fill="#6e552f" stroke="#c19a55" strokeWidth="1.500" />
      <path d="M34 26C40 20 56 20 62 26" stroke="#e9cf92" strokeWidth="2" fill="none" />
      <rect x="34" y="27" width="31" height="21" rx="9" fill="#0a0806" stroke="#8b6d3a" />
      <path d="M38 38Q41 33 44 38M54 38Q57 33 60 38M45 42Q49 47 53 42Z" stroke="#ffd766" strokeWidth="2" fill="#ffd766" fillOpacity=".3" strokeLinecap="round" />
      <path d="M26 30V42M70 32V44" stroke="#a87b35" strokeWidth="4" strokeLinecap="round" />
      <path d="M34 56H64L66 74H32Z" fill="#8a683a" stroke="#c79c55" />
      <circle cx="53" cy="66" r="7" fill="#54401f" />
      <path d="M53 61L55 65L59 65L56 68L57 72L53 70L49 72L50 68L47 65L51 65Z" fill="#ffd45c" />
      <path d="M24 40V54C16 56 12 62 15 68C20 73 28 72 31 66V56L27 54V40Z" fill="#2a2014" stroke="#c3924a" strokeWidth="2" />
      <path d="M18 60V68M23 58V70M27 58V69" stroke="#d8a75a" strokeWidth="2" />
      <rect x="72" y="42" width="25" height="26" rx="3" fill="#15110b" stroke="#c79b55" strokeWidth="1.500" transform="rotate(4 84 55)" />
      <path d="M79 38V45M92 39V46M75 50H94M75 56H93M74 62H90M80 49V66M86 49V66M92 49V60" stroke="#c79b55" strokeWidth="1.500" />
      <circle cx="90" cy="66" r="8" fill="#17120b" stroke="#8c7240" />
      <path d="M86 66L89 69L95 62" stroke="#ffd45c" strokeWidth="2.500" fill="none" />
      <text x="58" y="95" textAnchor="middle" fontSize="29" fontWeight="900" fill="url(#luz)" stroke="url(#luz)" strokeWidth="1.500" fontFamily="Inter, sans-serif">
        LUZ
      </text>
      <rect x="23" y="97" width="69" height="10" rx="4" fill="#060606" stroke="#8a6423" strokeWidth=".8" />
      <text x="57" y="105" textAnchor="middle" fontSize="7.500" fontWeight="700" fill="#f2ead8" fontFamily="Roboto, sans-serif">
        BOT DE CHECK-IN
      </text>
    </svg>
  );
}

function Header() {
  return (
    <header className="absolute inset-x-0 top-0 z-10">
      <div className="pointer-events-none absolute inset-x-0 top-0 h-[250px] bg-[linear-gradient(#121b27_0px,#121b27cc_20px,#121b27cc_110px,#121b2799_150px,#121b2726_215px,#121b2700_245px)]" />
      <div className="relative">
        <StatusBar />
        <div className="flex gap-[17px] px-[17px]">
          <button
            type="button"
            aria-label="Voltar"
            className="grid size-[127px] shrink-0 place-items-center rounded-full border border-[#34414e] bg-linear-to-b from-[#202e3b] to-[#222d3a] text-white"
          >
            <svg viewBox="0 0 44 44" className="size-11" fill="none" stroke="currentColor" strokeWidth="6" strokeLinecap="round" strokeLinejoin="round" aria-hidden>
              <path d="M41 22H4M22 3L3 22L22 41" />
            </svg>
          </button>
          <button
            type="button"
            className="flex h-[127px] flex-1 items-center gap-[22px] rounded-full border border-[#3f4858] bg-[radial-gradient(42%_130%_at_86%_8%,#41284f_0%,#3b284bcc_40%,transparent_100%),linear-gradient(100deg,#202c3a,#202f42_55%,#26293f_75%)] pl-1 text-left"
          >
            <Avatar />
            <span className="flex flex-col pt-2">
              <span className="flex items-center gap-[14px] text-[48px] leading-[58px] font-medium text-white">
                luz0022
                <svg viewBox="0 0 28 30" className="h-[30px] w-7" aria-hidden>
                  <path d="M1 11H8L18 2V28L8 20H1Z" fill="#51606f" />
                  <path d="M3 1L27 25" stroke="#202d3b" strokeWidth="6" />
                  <path d="M2 2L26 27" stroke="#51606f" strokeWidth="3" />
                </svg>
              </span>
              <span className="text-[38px] leading-[58px] text-[#8296a8]">bot</span>
            </span>
          </button>
          <button
            type="button"
            aria-label="Mais opções"
            className="grid size-[127px] shrink-0 place-items-center rounded-full border border-[#40384f] bg-linear-to-b from-[#3a2749] via-[#34284a] to-[#252b3c] text-white"
          >
            <svg viewBox="0 0 12 46" className="h-[46px] w-3" fill="currentColor" aria-hidden>
              <circle cx="6" cy="6" r="6" />
              <circle cx="6" cy="23" r="6" />
              <circle cx="6" cy="40" r="6" />
            </svg>
          </button>
        </div>
      </div>
    </header>
  );
}

/* ---------- messages ---------- */

function Line({ icon, children }: { icon: ReactNode; children: ReactNode }) {
  return (
    <p className="flex h-[58px] items-center gap-[14px]">
      {icon}
      <span className="whitespace-nowrap">{children}</span>
    </p>
  );
}

function BotBubble({ message }: { message: Incoming }) {
  return (
    <article className="relative ml-[31px] self-start rounded-[48px] rounded-bl-none bg-[#222e39] px-[31px] py-[15px] text-[46px] leading-[58px] text-[#f4f6f8]">
      <svg viewBox="0 0 15 36" className="absolute bottom-0 -left-[14px] h-9 w-[15px] text-[#222e39]" fill="currentColor" aria-hidden>
        <path d="M14 0C14 16 9 28 0 33V36H15V0Z" />
      </svg>
      <Line icon={<PartyEmoji />}>O código de hoje chegou!</Line>
      <div className="h-[58px]" />
      <Line icon={<GiftEmoji />}>
        Código:{" "}
        <code className="font-['DejaVu_Sans_Mono','Liberation_Mono',monospace] text-[41px]">{message.code}</code>
      </Line>
      <Line icon={<GemEmoji />}>Pontos: {message.points}</Line>
      <Line icon={<CalendarEmoji />}>Este mês: {message.month}</Line>
      <div className="flex items-end gap-5">
        <Line icon={<TrophyEmoji />}>Total de check-ins: {message.total}</Line>
        <time className="-mb-1.5 text-[34px] leading-9 whitespace-nowrap text-[#76818c]">{message.time}</time>
      </div>
    </article>
  );
}

function MyBubble({ message }: { message: Outgoing }) {
  return (
    <article
      className={`relative mr-[31px] flex items-end gap-5 self-end rounded-[45px] rounded-br-none pt-[15px] pr-[19px] pb-4 pl-[31px] ${message.tone}`}
    >
      <p className="text-[46px] leading-[58px] whitespace-nowrap text-white">{message.text}</p>
      <div className="-mb-1.5 flex items-center gap-3 text-white">
        <time className="text-[34px] leading-9 whitespace-nowrap">{message.time}</time>
        <svg viewBox="0 0 45 26" className="h-[26px] w-[45px]" fill="none" stroke="currentColor" strokeWidth="4" strokeLinecap="round" strokeLinejoin="round" aria-hidden>
          <path d="M2 15L10 23L30 3M21 23L43 3" />
        </svg>
      </div>
      <svg viewBox="0 0 16 36" className="absolute -right-[15px] bottom-0 h-9 w-4" fill="currentColor" aria-hidden>
        <path d="M1 0C1 16 6 28 16 32V36H0V0Z" />
      </svg>
    </article>
  );
}

function Chat() {
  return (
    <main className="relative flex min-h-0 flex-1 flex-col justify-end gap-[19px] overflow-hidden pb-[27px]">
      {messages.map((message, i) => {
        if (message.from === "bot") return <BotBubble key={i} message={message} />;
        if (message.from === "me") return <MyBubble key={i} message={message} />;
        return (
          <div
            key={i}
            className="self-center rounded-full bg-[#2a374c] px-6 text-[39px] leading-[64px] font-medium text-white"
          >
            {message.text}
          </div>
        );
      })}
    </main>
  );
}

/* ---------- composer ---------- */

function Composer() {
  return (
    <form className="relative mx-[19px] flex h-[124px] items-center rounded-full border-2 border-[#2b3743] border-t-[#414d59] bg-linear-to-r from-[#1f2a38] to-[#1c2831] pr-1.5 pl-9">
      <button type="button" aria-label="Emojis" className="text-[#aeb3b9]">
        <svg viewBox="0 0 66 66" className="size-[66px]" fill="none" stroke="currentColor" strokeWidth="5" strokeLinecap="round" aria-hidden>
          <circle cx="33" cy="33" r="30" />
          <path d="M21 41Q33 56 45 41" />
          <ellipse cx="23" cy="27" rx="4" ry="5" fill="currentColor" stroke="none" />
          <ellipse cx="43" cy="27" rx="4" ry="5" fill="currentColor" stroke="none" />
        </svg>
      </button>
      <label className="relative ml-[34px] flex min-w-0 flex-1 items-center pb-1.5">
        <input
          type="text"
          aria-label="Mensagem"
          placeholder="Mensagem"
          className="h-[66px] w-full bg-transparent text-[50px] text-white outline-none placeholder:text-[#6f7a88]"
        />
        <span className="absolute left-0 h-[66px] w-1.5 bg-[#549cdb]" />
      </label>
      <button type="button" aria-label="Anexar" className="text-[#aeb3b9]">
        <svg viewBox="0 0 56 64" className="h-16 w-14" fill="none" stroke="currentColor" strokeWidth="5" strokeLinecap="round" aria-hidden>
          <path d="M3 24L14 10C21 1 33 0 43 7C54 15 56 25 49 35L30 56C24 63 15 64 8 58C1 52 1 44 7 36L23 18C27 13 34 13 38 17C42 21 41 26 37 31L21 48" />
        </svg>
      </button>
      <button
        type="button"
        aria-label="Gravar áudio"
        className="ml-10 grid size-[105px] shrink-0 place-items-center rounded-full bg-[#239af0] text-white"
      >
        <svg viewBox="0 0 44 54" className="h-[54px] w-11" fill="none" stroke="currentColor" strokeWidth="6" strokeLinecap="round" aria-hidden>
          <rect x="12" y="0" width="20" height="35" rx="10" fill="currentColor" stroke="none" />
          <path d="M3 23C3 51 41 51 41 23M22 45V51" />
        </svg>
      </button>
    </form>
  );
}

/* ---------- bot keyboard ---------- */

const key =
  "flex h-[121px] items-center justify-center gap-2.5 rounded-[28px] bg-[#2183cb] pt-1 pr-1 text-[38px] font-medium text-white";
const keyIcon = "size-11 shrink-0";

function Keyboard() {
  return (
    <section className="relative mt-[25px] rounded-t-[76px] border-t-2 border-[#414d59] bg-[#1e2935] px-[22px] pt-5">
      <div className="grid grid-cols-2 gap-[11px]">
        <button type="button" className={`${key} rounded-tl-[56px]`}>
          <BustEmoji className={keyIcon} />
          Meu perfil
        </button>
        <button type="button" className={`${key} rounded-tr-[56px]`}>
          <GemEmoji className={keyIcon} />
          Meus pontos
        </button>
        <button type="button" className={`${key} col-span-2`}>
          <GlobeEmoji className={keyIcon} />
          Domínios atuais
        </button>
        <button type="button" className={`${key} rounded-bl-[56px]`}>
          <SpeechEmoji className={keyIcon} />
          Suporte oficial
        </button>
        <button type="button" className={`${key} rounded-br-[56px]`}>
          <PencilEmoji className={keyIcon} />
          Alterar ID
        </button>
      </div>
      <div className="mx-auto mt-[39px] mb-4 h-[11px] w-full max-w-[418px] rounded-full bg-[#adb2b9]" />
    </section>
  );
}

export default function App() {
  return (
    <div className="relative flex h-screen flex-col overflow-hidden bg-[#121a26] bg-[radial-gradient(ellipse_at_0%_25%,#0d151b_0%,transparent_45%),radial-gradient(ellipse_at_100%_75%,#0b1217_0%,transparent_50%),radial-gradient(ellipse_at_95%_25%,#131a2c_0%,transparent_60%),radial-gradient(ellipse_at_15%_75%,#162430_0%,transparent_60%)] font-[Roboto,'Noto_Sans',sans-serif]">
      <Wallpaper />
      <Header />
      <Chat />
      <Composer />
      <Keyboard />
    </div>
  );
}
